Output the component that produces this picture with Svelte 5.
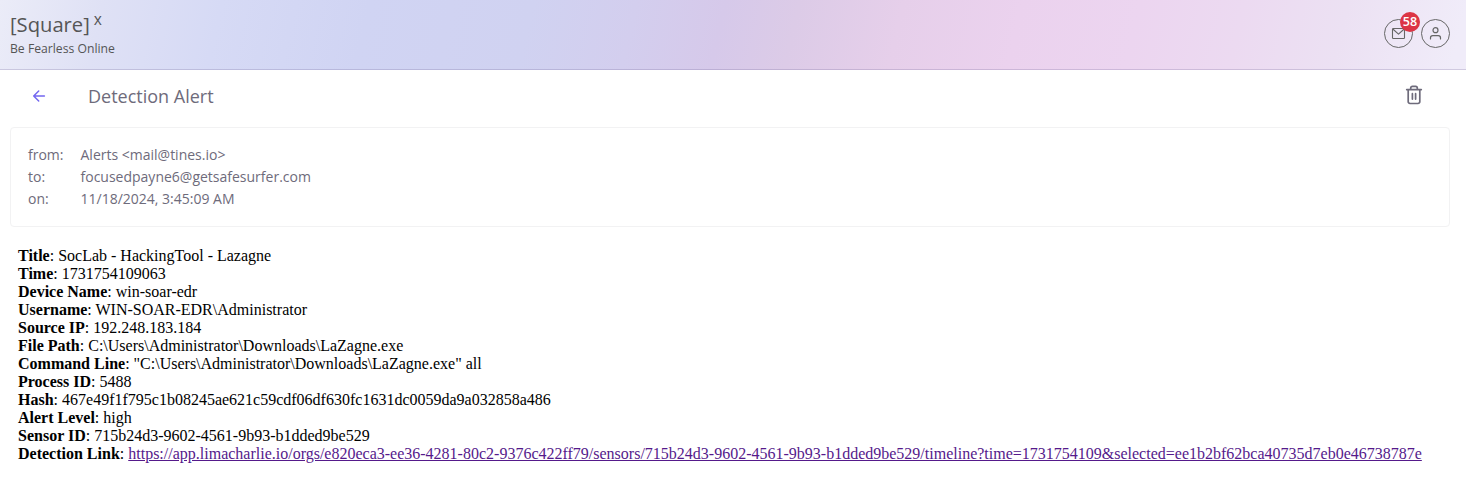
<script>
  const headers = [
    ['from:', 'Alerts <mail@tines.io>'],
    ['to:', 'focusedpayne6@getsafesurfer.com'],
    ['on:', '11/18/2024, 3:45:09 AM'],
  ];
  const fields = [
    ['Title', 'SocLab - HackingTool - Lazagne'],
    ['Time', '1731754109063'],
    ['Device Name', 'win-soar-edr'],
    ['Username', 'WIN-SOAR-EDR\\Administrator'],
    ['Source IP', '192.248.183.184'],
    ['File Path', 'C:\\Users\\Administrator\\Downloads\\LaZagne.exe'],
    ['Command Line', '"C:\\Users\\Administrator\\Downloads\\LaZagne.exe" all'],
    ['Process ID', '5488'],
    ['Hash', '467e49f1f795c1b08245ae621c59cdf06df630fc1631dc0059da9a032858a486'],
    ['Alert Level', 'high'],
    ['Sensor ID', '715b24d3-9602-4561-9b93-b1dded9be529'],
  ];
  const link =
    'https://app.limacharlie.io/orgs/e820eca3-ee36-4281-80c2-9376c422ff79/sensors/715b24d3-9602-4561-9b93-b1dded9be529/timeline?time=1731754109&selected=ee1b2bf62bca40735d7eb0e46738787e';
</script>

<header class="topbar">
  <div class="brand">
    <div class="logo">[Square]<span class="sup">x</span></div>
    <div class="tagline">Be Fearless Online</div>
  </div>
  <div class="actions">
    <button class="round" aria-label="Inbox">
      <svg width="17" height="17" viewBox="0 0 17 17" fill="none" stroke="currentColor" stroke-width="1.1" stroke-linejoin="round">
        <rect x="2.5" y="3.5" width="12" height="10" rx="0.8" />
        <path d="M2.8 4 8.5 9.2 14.2 4" />
      </svg>
      <span class="badge">58</span>
    </button>
    <button class="round" aria-label="Account">
      <svg width="17" height="17" viewBox="0 0 17 17" fill="none" stroke="currentColor" stroke-width="1.2" stroke-linecap="round">
        <circle cx="8.5" cy="5.2" r="2.5" />
        <path d="M3.5 14v-1.2a2.2 2.2 0 0 1 2.2-2.2h5.6a2.2 2.2 0 0 1 2.2 2.2V14" />
      </svg>
    </button>
  </div>
</header>

<div class="subject">
  <button class="icon" aria-label="Back">
    <svg width="14" height="14" viewBox="0 0 14 14" fill="none" stroke="#7367f0" stroke-width="1.5" stroke-linecap="round" stroke-linejoin="round">
      <path d="M12.4 7H1.7M6.7 2 1.7 7l5 5" />
    </svg>
  </button>
  <h1>Detection Alert</h1>
  <button class="icon trash" aria-label="Delete">
    <svg width="20" height="20" viewBox="0 0 20 20" fill="none" stroke="#6e6b7b" stroke-width="1.7" stroke-linecap="round" stroke-linejoin="round">
      <path d="M2.7 4.6h14.6M4.2 4.6v12.1a1.8 1.8 0 0 0 1.8 1.8h8a1.8 1.8 0 0 0 1.8-1.8V4.6M6.7 4.3V3.1a1.7 1.7 0 0 1 1.7-1.7h3.2a1.7 1.7 0 0 1 1.7 1.7v1.2M8.4 8.7v5.4M11.6 8.7v5.4" />
    </svg>
  </button>
</div>

<section class="meta">
  {#each headers as [label, value]}
    <span>{label}</span><span>{value}</span>
  {/each}
</section>

<article class="message">
  {#each fields as [label, value]}
    <div><b>{label}</b>: {value}</div>
  {/each}
  <div><b>Detection Link</b>: <a href={link}>{link}</a></div>
</article>

<style>
  :global(body) {
    background: #fff;
    overflow: hidden;
  }
  button {
    padding: 0;
    background: none;
    border: 0;
    font-family: inherit;
  }
  svg {
    display: block;
  }
  .topbar {
    box-sizing: border-box;
    height: 70px;
    padding: 0 16px 0 10px;
    display: flex;
    justify-content: space-between;
    border-bottom: 1px solid rgba(110, 100, 150, 0.25);
    background: linear-gradient(
      103deg,
      #ebecf8 0%,
      #dfe1f5 7%,
      #d6daf5 15%,
      #d0d4f3 25%,
      #d0d2f1 36%,
      #d3ceee 43%,
      #d6c9ea 49%,
      #dccbe7 54%,
      #e6cfea 61%,
      #ebd2ee 69%,
      #ecd5f0 77%,
      #ecdaf1 84%,
      #ece1f3 91%,
      #f0ecf9 99%
    );
    background-origin: border-box;
    color: #555;
    font-family: 'Open Sans', 'Noto Sans', sans-serif;
  }
  .logo {
    display: flex;
    padding-top: 10px;
    font-size: 20.2px;
    line-height: 28px;
  }
  .sup {
    margin: -5px 0 0 4px;
    font-size: 15.5px;
  }
  .tagline {
    padding-top: 2px;
    font-size: 12.2px;
    line-height: 18px;
  }
  .actions {
    display: flex;
    gap: 8px;
    padding-top: 19px;
  }
  .round {
    position: relative;
    box-sizing: border-box;
    width: 29px;
    height: 29px;
    display: grid;
    place-items: center;
    border: 1px solid #666;
    border-radius: 50%;
    color: #666;
  }
  .badge {
    position: absolute;
    top: -8px;
    right: -8px;
    width: 20px;
    height: 20px;
    border-radius: 50%;
    background: #dc3545;
    color: #fff;
    font-size: 12.5px;
    font-weight: 600;
    line-height: 19px;
    text-align: center;
  }
  .subject {
    height: 57px;
    box-sizing: border-box;
    padding: 0 42px 5px 32px;
    display: flex;
    align-items: center;
    font-family: 'Open Sans', 'Noto Sans', sans-serif;
  }
  h1 {
    margin: 0 0 0 42px;
    font-size: 18px;
    font-weight: 400;
    line-height: 26px;
    color: #6e6b7b;
  }
  .trash {
    margin: 0 0 2px auto;
  }
  .meta {
    box-sizing: border-box;
    height: 100px;
    margin: 0 16px 0 10px;
    padding: 16px 17px;
    display: grid;
    grid-template-columns: 52.5px 1fr;
    grid-auto-rows: 22px;
    border: 1px solid #f2f2f3;
    border-radius: 4px;
    color: #6e6b7b;
    font: 14px/22px 'Open Sans', 'Noto Sans', sans-serif;
  }
  .message {
    padding: 20px 18px 0;
    color: #000;
    font: 16px/18px 'Liberation Serif', serif;
    white-space: nowrap;
  }
  a {
    color: #551a8b;
  }
</style>
